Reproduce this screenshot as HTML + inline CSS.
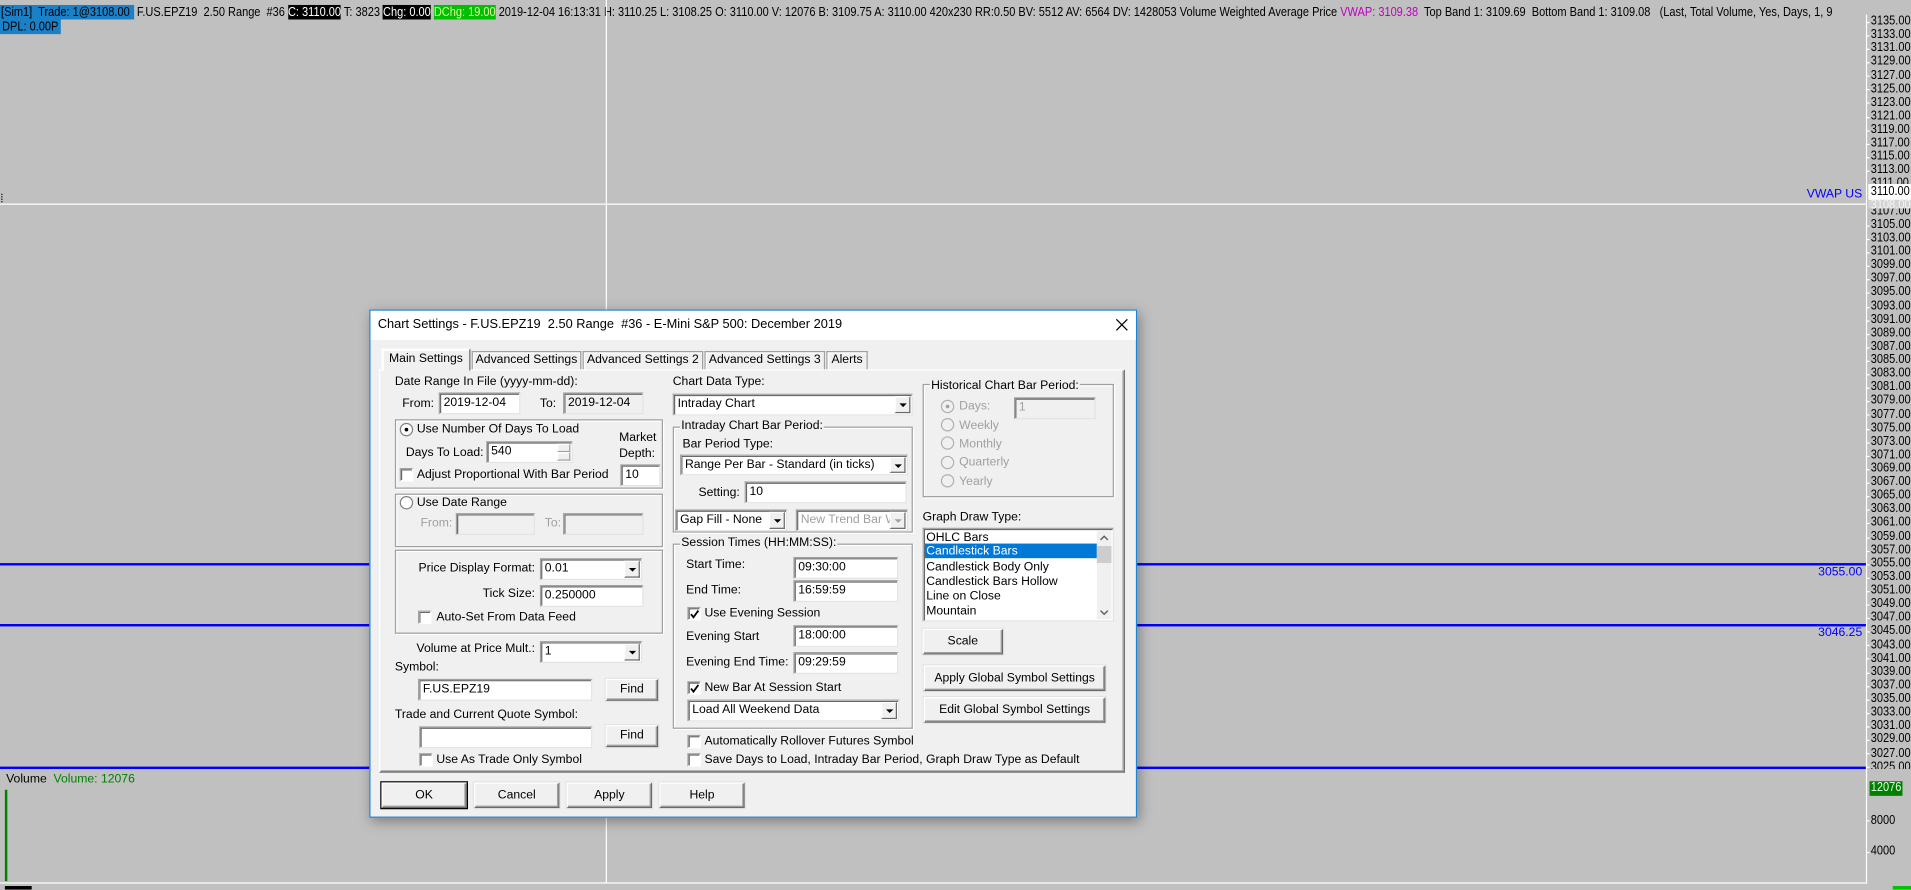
<!DOCTYPE html>
<html><head><meta charset="utf-8">
<style>
html,body{margin:0;padding:0;width:1911px;height:890px;overflow:hidden;background:#c0c0c0}
#s{position:absolute;left:0;top:0;width:1568px;height:730px;transform:scale(1.21875);transform-origin:0 0;background:#c0c0c0;font-family:"Liberation Sans",Arial,sans-serif;overflow:hidden}
.a{position:absolute}
.t{position:absolute;white-space:nowrap;font-size:10px;line-height:13px;height:13px;color:#000}
.ax{position:absolute;left:1535px;font-size:10.5px;line-height:13px;color:#000;white-space:nowrap;transform:scaleX(0.86);transform-origin:0 0}
.tk{position:absolute;left:1531px;width:3px;height:1px;background:#fff}
.in{position:absolute;background:#fff;border:1px solid;border-color:#a0a0a0 #e3e3e3 #e3e3e3 #a0a0a0;box-shadow:inset 1px 1px 0 #696969;box-sizing:border-box;font-size:10px;padding-left:3px;white-space:nowrap;overflow:hidden}
.dis{background:#f0f0f0;color:#a0a0a0}
.cb{position:absolute;background:#fff;border:1px solid;border-color:#a0a0a0 #e3e3e3 #e3e3e3 #a0a0a0;box-shadow:inset 1px 1px 0 #696969;box-sizing:border-box;font-size:10px;padding-left:3px;white-space:nowrap;overflow:hidden}
.cb i{position:absolute;right:1px;top:1px;bottom:1px;width:13px;background:#f0f0f0;border:1px solid;border-color:#fff #696969 #696969 #fff;box-sizing:border-box}
.cb i:after{content:"";position:absolute;left:3px;top:50%;margin-top:-1px;border-left:3px solid transparent;border-right:3px solid transparent;border-top:3px solid #000}
.cb.dis i:after{border-top-color:#a0a0a0}
.btn{position:absolute;background:#f0f0f0;border:1px solid;border-color:#fff #696969 #696969 #fff;box-shadow:inset -1px -1px 0 #a0a0a0,0 0 0 1px #e3e3e3;box-sizing:border-box;font-size:10px;text-align:center;white-space:nowrap}
.grp{position:absolute;border:1px solid #a0a0a0;box-shadow:1px 1px 0 #fff,inset 1px 1px 0 #fff;box-sizing:border-box}
.gl{position:absolute;background:#f0f0f0;padding:0 1px;font-size:10px;line-height:13px;white-space:nowrap}
.ck{position:absolute;width:11px;height:11px;background:#fff;border:1px solid;border-color:#a0a0a0 #fff #fff #a0a0a0;box-shadow:inset 1px 1px 0 #696969;box-sizing:border-box}
.rd{position:absolute;width:11px;height:11px;border-radius:50%;background:#fff;border:1px solid #808080;box-sizing:border-box}
.rd.on:after{content:"";position:absolute;left:3px;top:3px;width:3px;height:3px;border-radius:50%;background:#000}
.rd.g{background:#f0f0f0;border-color:#b0b0b0}
.rd.g.on:after{background:#a0a0a0}
.tab{position:absolute;top:288px;height:15px;border:1px solid #a0a0a0;border-bottom:none;box-sizing:border-box;background:#f0f0f0;font-size:10px;line-height:14px;text-align:center;white-space:nowrap;box-shadow:inset 1px 1px 0 #fff}
.gr{color:#a0a0a0}
</style></head><body>
<div id="s">
<!-- status rows -->
<div class="a" style="left:0;top:0;width:1531px;height:30px;overflow:hidden">
<div class="a" style="left:0;top:4px;height:12px;width:1780px;overflow:hidden;white-space:nowrap;font-size:10.5px;line-height:12px;transform:scaleX(0.86);transform-origin:0 0"><span style="background:#1a80c8;color:#000;padding:0 1px">[Sim1]&nbsp; Trade: 1@3108.00&nbsp;</span> F.US.EPZ19&nbsp; 2.50 Range&nbsp; #36 <span style="background:#000;color:#fff">C: 3110.00</span> T: 3823 <span style="background:#000;color:#fff">Chg: 0.00</span> <span style="background:#00c000;color:#e0ffa0">DChg: 19.00</span> 2019-12-04 16:13:31 H: 3110.25 L: 3108.25 O: 3110.00 V: 12076 B: 3109.75 A: 3110.00 420x230 RR:0.50 BV: 5512 AV: 6564 DV: 1428053 Volume Weighted Average Price <span style="color:#c000c0">VWAP: 3109.38</span>&nbsp; Top Band 1: 3109.69&nbsp; Bottom Band 1: 3109.08&nbsp;&nbsp; (Last, Total Volume, Yes, Days, 1, 9</div>
<div class="a" style="left:0;top:16px;height:12px;font-size:10.5px;line-height:12px;background:#1a80c8;padding:0 2px;transform:scaleX(0.86);transform-origin:0 0">DPL: 0.00P</div>
</div>

<!-- crosshair -->
<div class="a" style="left:497px;top:0;width:1px;height:725px;background:#fff"></div>
<div class="a" style="left:0;top:167px;width:1531px;height:1px;background:#fff"></div>
<div class="a" style="left:1px;top:159px;width:1px;height:7px;border-left:1px dotted #000"></div>
<!-- axis line -->
<div class="a" style="left:1531px;top:12px;width:1px;height:713px;background:#fff"></div>
<div class="a" style="left:0;top:724px;width:1532px;height:1px;background:#fff"></div>
<div class="a" style="left:4px;top:727px;width:22px;height:3px;background:#000"></div>
<div class="a" style="left:1553px;top:727px;width:15px;height:3px;background:#00c000"></div>

<!-- blue lines -->
<div class="a" style="left:0;top:462px;width:1531px;height:2px;background:#0000ff"></div>
<div class="a" style="left:0;top:512px;width:1531px;height:2px;background:#0000ff"></div>
<div class="a" style="left:0;top:629px;width:1531px;height:2px;background:#0000ff"></div>
<div class="t" style="left:1480px;width:48px;text-align:right;top:463px;color:#0000ff">3055.00</div>
<div class="t" style="left:1480px;width:48px;text-align:right;top:513px;color:#0000ff">3046.25</div>
<div class="t" style="left:1470px;width:58px;text-align:right;top:153px;color:#0000ff">VWAP US</div>

<!-- axis labels -->
<div class="a" style="left:1532px;top:0;width:36px;height:631px;overflow:hidden">
<div style="position:absolute;left:-1532px;top:0;width:1568px;height:631px">
<div class="ax" style="top:11px">3135.00</div><div class="ax" style="top:22px">3133.00</div><div class="ax" style="top:33px">3131.00</div><div class="ax" style="top:44px">3129.00</div><div class="ax" style="top:55.5px">3127.00</div><div class="ax" style="top:66.6px">3125.00</div><div class="ax" style="top:77.7px">3123.00</div><div class="ax" style="top:88.8px">3121.00</div><div class="ax" style="top:100px">3119.00</div><div class="ax" style="top:111px">3117.00</div><div class="ax" style="top:122px">3115.00</div><div class="ax" style="top:133.3px">3113.00</div><div class="ax" style="top:144.4px">3111.00</div><div class="ax" style="top:166.7px">3107.00</div><div class="ax" style="top:177.8px">3105.00</div><div class="ax" style="top:188.9px">3103.00</div><div class="ax" style="top:200px">3101.00</div><div class="ax" style="top:211.2px">3099.00</div><div class="ax" style="top:222.3px">3097.00</div><div class="ax" style="top:233.4px">3095.00</div><div class="ax" style="top:244.5px">3093.00</div><div class="ax" style="top:255.6px">3091.00</div><div class="ax" style="top:266.8px">3089.00</div><div class="ax" style="top:277.9px">3087.00</div><div class="ax" style="top:289px">3085.00</div><div class="ax" style="top:300.1px">3083.00</div><div class="ax" style="top:311.2px">3081.00</div><div class="ax" style="top:322.4px">3079.00</div><div class="ax" style="top:333.5px">3077.00</div><div class="ax" style="top:344.6px">3075.00</div><div class="ax" style="top:355.7px">3073.00</div><div class="ax" style="top:366.8px">3071.00</div><div class="ax" style="top:378px">3069.00</div><div class="ax" style="top:389px">3067.00</div><div class="ax" style="top:400.2px">3065.00</div><div class="ax" style="top:411.3px">3063.00</div><div class="ax" style="top:422.4px">3061.00</div><div class="ax" style="top:433.6px">3059.00</div><div class="ax" style="top:444.7px">3057.00</div><div class="ax" style="top:455.8px">3055.00</div><div class="ax" style="top:467px">3053.00</div><div class="ax" style="top:478px">3051.00</div><div class="ax" style="top:489.2px">3049.00</div><div class="ax" style="top:500.3px">3047.00</div><div class="ax" style="top:511.4px">3045.00</div><div class="ax" style="top:522.5px">3043.00</div><div class="ax" style="top:533.6px">3041.00</div><div class="ax" style="top:544.8px">3039.00</div><div class="ax" style="top:555.9px">3037.00</div><div class="ax" style="top:567px">3035.00</div><div class="ax" style="top:578px">3033.00</div><div class="ax" style="top:589.2px">3031.00</div><div class="ax" style="top:600.4px">3029.00</div><div class="ax" style="top:611.5px">3027.00</div><div class="ax" style="top:622.6px">3025.00</div>
</div></div>
<div class="a" style="left:1533px;top:151px;width:35px;height:13px;background:#fff;overflow:hidden"><div class="ax" style="left:2px;top:0">3110.00</div></div>
<div class="a" style="left:1533px;top:164px;width:35px;height:7px;background:#d4d4d4;overflow:hidden"><div class="ax" style="left:2px;top:-2px;color:#f4f4f4">3108.00</div></div>
<div class="tk" style="top:18px"></div><div class="tk" style="top:29px"></div><div class="tk" style="top:40px"></div><div class="tk" style="top:51px"></div><div class="tk" style="top:62px"></div><div class="tk" style="top:73px"></div><div class="tk" style="top:84px"></div><div class="tk" style="top:96px"></div><div class="tk" style="top:107px"></div><div class="tk" style="top:118px"></div><div class="tk" style="top:129px"></div><div class="tk" style="top:140px"></div><div class="tk" style="top:185px"></div><div class="tk" style="top:196px"></div><div class="tk" style="top:207px"></div><div class="tk" style="top:218px"></div><div class="tk" style="top:229px"></div><div class="tk" style="top:240px"></div><div class="tk" style="top:252px"></div><div class="tk" style="top:263px"></div><div class="tk" style="top:274px"></div><div class="tk" style="top:285px"></div><div class="tk" style="top:296px"></div><div class="tk" style="top:307px"></div><div class="tk" style="top:318px"></div><div class="tk" style="top:329px"></div><div class="tk" style="top:340px"></div><div class="tk" style="top:352px"></div><div class="tk" style="top:363px"></div><div class="tk" style="top:374px"></div><div class="tk" style="top:385px"></div><div class="tk" style="top:396px"></div><div class="tk" style="top:407px"></div><div class="tk" style="top:418px"></div><div class="tk" style="top:429px"></div><div class="tk" style="top:441px"></div><div class="tk" style="top:452px"></div><div class="tk" style="top:463px"></div><div class="tk" style="top:474px"></div><div class="tk" style="top:485px"></div><div class="tk" style="top:496px"></div><div class="tk" style="top:507px"></div><div class="tk" style="top:518px"></div><div class="tk" style="top:529px"></div><div class="tk" style="top:540px"></div><div class="tk" style="top:552px"></div><div class="tk" style="top:563px"></div><div class="tk" style="top:574px"></div><div class="tk" style="top:585px"></div><div class="tk" style="top:596px"></div><div class="tk" style="top:607px"></div><div class="tk" style="top:618px"></div><div class="tk" style="top:629px"></div><div class="tk" style="top:673px"></div><div class="tk" style="top:699px"></div>

<!-- volume pane -->
<div class="t" style="left:5px;top:633px">Volume&nbsp; <span style="color:#008000">Volume: 12076</span></div>
<div class="a" style="left:4px;top:648px;width:2px;height:75px;background:#008000"></div>
<div class="a" style="left:1534px;top:641px;width:27px;height:12px;background:#008000;overflow:hidden"><div class="ax" style="left:1px;top:-1px;color:#e0ffe0">12076</div></div>
<div class="ax" style="top:667px">8000</div>
<div class="ax" style="top:692px">4000</div>

<!-- dialog -->
<div class="a" style="left:303px;top:254px;width:630px;height:417px;background:#f0f0f0;border:1px solid #1883d7;box-sizing:border-box;box-shadow:2px 3px 10px rgba(0,0,0,0.35)"></div>
<div class="a" style="left:304px;top:255px;width:628px;height:24px;background:#fff"></div>
<div class="t" style="left:310px;top:260px;font-size:10.5px">Chart Settings - F.US.EPZ19&nbsp; 2.50 Range&nbsp; #36 - E-Mini S&amp;P 500: December 2019</div>
<svg class="a" style="left:915px;top:261px" width="11" height="11"><path d="M1 1L10 10M10 1L1 10" stroke="#000" stroke-width="1"/></svg>

<!-- tab panel -->
<div class="a" style="left:311px;top:303px;width:612px;height:331px;border:1px solid;border-color:#fff #696969 #696969 #fff;box-shadow:inset -1px -1px 0 #a0a0a0;box-sizing:border-box"></div>
<div class="tab" style="left:387px;width:90px">Advanced Settings</div>
<div class="tab" style="left:478px;width:99px">Advanced Settings 2</div>
<div class="tab" style="left:578px;width:99px">Advanced Settings 3</div>
<div class="tab" style="left:678px;width:34px">Alerts</div>
<div class="tab" style="left:313px;top:286px;height:18px;width:73px;line-height:16px;border-color:#fff #696969 #696969 #fff">Main Settings</div>

<!-- left column -->
<div class="t" style="left:324px;top:307px">Date Range In File (yyyy-mm-dd):</div>
<div class="t" style="left:330px;top:325px">From:</div>
<div class="in" style="left:360px;top:322px;width:67px;height:18px;line-height:16px">2019-12-04</div>
<div class="t" style="left:443px;top:325px">To:</div>
<div class="in" style="left:462px;top:322px;width:66px;height:18px;line-height:16px;background:#f0f0f0">2019-12-04</div>

<div class="grp" style="left:324px;top:344px;width:220px;height:57px"></div>
<div class="rd on" style="left:328px;top:347px"></div>
<div class="t" style="left:342px;top:346px">Use Number Of Days To Load</div>
<div class="t" style="left:508px;top:353px">Market</div>
<div class="t" style="left:508px;top:366px">Depth:</div>
<div class="t" style="left:333px;top:365px">Days To Load:</div>
<div class="in" style="left:399px;top:362px;width:71px;height:18px;line-height:16px">540
 <div style="position:absolute;right:1px;top:1px;width:11px;height:7px;border:1px solid;border-color:#fff #a0a0a0 #a0a0a0 #fff;background:#f0f0f0;box-sizing:border-box"></div>
 <div style="position:absolute;right:1px;top:8px;width:11px;height:7px;border:1px solid;border-color:#fff #a0a0a0 #a0a0a0 #fff;background:#f0f0f0;box-sizing:border-box"></div>
</div>
<div class="ck" style="left:328px;top:384px"></div>
<div class="t" style="left:342px;top:383px">Adjust Proportional With Bar Period</div>
<div class="in" style="left:509px;top:381px;width:33px;height:18px;line-height:16px">10</div>

<div class="grp" style="left:324px;top:405px;width:220px;height:44px"></div>
<div class="rd" style="left:328px;top:407px"></div>
<div class="t" style="left:342px;top:406px">Use Date Range</div>
<div class="t gr" style="left:345px;top:423px">From:</div>
<div class="in dis" style="left:374px;top:421px;width:65px;height:18px"></div>
<div class="t gr" style="left:447px;top:423px">To:</div>
<div class="in dis" style="left:462px;top:421px;width:66px;height:18px"></div>

<div class="grp" style="left:324px;top:451px;width:220px;height:69px"></div>
<div class="t" style="left:330px;width:109px;text-align:right;top:460px">Price Display Format:</div>
<div class="cb" style="left:443px;top:458px;width:84px;height:18px;line-height:16px">0.01<i></i></div>
<div class="t" style="left:330px;width:109px;text-align:right;top:481px">Tick Size:</div>
<div class="in" style="left:443px;top:480px;width:85px;height:18px;line-height:16px">0.250000</div>
<div class="ck" style="left:343px;top:501px"></div>
<div class="t" style="left:358px;top:500px">Auto-Set From Data Feed</div>

<div class="t" style="left:320px;width:119px;text-align:right;top:526px">Volume at Price Mult.:</div>
<div class="cb" style="left:443px;top:526px;width:84px;height:18px;line-height:16px">1<i></i></div>
<div class="t" style="left:324px;top:541px">Symbol:</div>
<div class="in" style="left:343px;top:557px;width:143px;height:18px;line-height:16px">F.US.EPZ19</div>
<div class="btn" style="left:497px;top:557px;width:43px;height:18px;line-height:16px">Find</div>
<div class="t" style="left:324px;top:580px">Trade and Current Quote Symbol:</div>
<div class="in" style="left:344px;top:596px;width:142px;height:18px"></div>
<div class="btn" style="left:497px;top:595px;width:43px;height:18px;line-height:16px">Find</div>
<div class="ck" style="left:344px;top:618px"></div>
<div class="t" style="left:358px;top:617px">Use As Trade Only Symbol</div>

<!-- middle column -->
<div class="t" style="left:552px;top:307px">Chart Data Type:</div>
<div class="cb" style="left:552px;top:323px;width:197px;height:18px;line-height:16px">Intraday Chart<i></i></div>
<div class="grp" style="left:552px;top:350px;width:197px;height:87px"></div>
<div class="gl" style="left:558px;top:343px">Intraday Chart Bar Period:</div>
<div class="t" style="left:560px;top:358px">Bar Period Type:</div>
<div class="cb" style="left:558px;top:373px;width:187px;height:17px;line-height:15px">Range Per Bar - Standard (in ticks)<i></i></div>
<div class="t" style="left:560px;width:47px;text-align:right;top:398px">Setting:</div>
<div class="in" style="left:611px;top:395px;width:133px;height:18px;line-height:16px">10</div>
<div class="cb" style="left:554px;top:418px;width:92px;height:18px;line-height:16px">Gap Fill - None<i></i></div>
<div class="cb dis" style="left:653px;top:418px;width:92px;height:18px;line-height:16px">New Trend Bar W<i></i></div>

<div class="grp" style="left:552px;top:446px;width:197px;height:152px"></div>
<div class="gl" style="left:558px;top:439px">Session Times (HH:MM:SS):</div>
<div class="t" style="left:563px;top:457px">Start Time:</div>
<div class="in" style="left:651px;top:457px;width:86px;height:18px;line-height:16px">09:30:00</div>
<div class="t" style="left:563px;top:478px">End Time:</div>
<div class="in" style="left:651px;top:476px;width:86px;height:18px;line-height:16px">16:59:59</div>
<div class="ck" style="left:564px;top:498px"><svg style="position:absolute;left:1px;top:1px" width="8" height="8"><path d="M1 4L3 6.5L7 1" stroke="#000" stroke-width="1.5" fill="none"/></svg></div>
<div class="t" style="left:578px;top:497px">Use Evening Session</div>
<div class="t" style="left:563px;top:516px">Evening Start</div>
<div class="in" style="left:651px;top:513px;width:86px;height:18px;line-height:16px">18:00:00</div>
<div class="t" style="left:563px;top:537px">Evening End Time:</div>
<div class="in" style="left:651px;top:535px;width:86px;height:18px;line-height:16px">09:29:59</div>
<div class="ck" style="left:564px;top:559px"><svg style="position:absolute;left:1px;top:1px" width="8" height="8"><path d="M1 4L3 6.5L7 1" stroke="#000" stroke-width="1.5" fill="none"/></svg></div>
<div class="t" style="left:578px;top:558px">New Bar At Session Start</div>
<div class="cb" style="left:564px;top:574px;width:174px;height:18px;line-height:16px">Load All Weekend Data<i></i></div>
<div class="ck" style="left:564px;top:603px"></div>
<div class="t" style="left:578px;top:602px">Automatically Rollover Futures Symbol</div>
<div class="ck" style="left:564px;top:618px"></div>
<div class="t" style="left:578px;top:617px">Save Days to Load, Intraday Bar Period, Graph Draw Type as Default</div>

<!-- right column -->
<div class="grp" style="left:757px;top:315px;width:157px;height:93px"></div>
<div class="gl" style="left:763px;top:310px">Historical Chart Bar Period:</div>
<div class="rd g on" style="left:772px;top:328px"></div><div class="t gr" style="left:787px;top:327px">Days:</div>
<div class="in dis" style="left:832px;top:326px;width:67px;height:18px;line-height:16px">1</div>
<div class="rd g" style="left:772px;top:343px"></div><div class="t gr" style="left:787px;top:343px">Weekly</div>
<div class="rd g" style="left:772px;top:358px"></div><div class="t gr" style="left:787px;top:358px">Monthly</div>
<div class="rd g" style="left:772px;top:374px"></div><div class="t gr" style="left:787px;top:373px">Quarterly</div>
<div class="rd g" style="left:772px;top:389px"></div><div class="t gr" style="left:787px;top:389px">Yearly</div>

<div class="t" style="left:757px;top:418px">Graph Draw Type:</div>
<div class="in" style="left:757px;top:433px;width:157px;height:77px;padding:0"></div>
<div class="a" style="left:759px;top:446px;width:141px;height:12px;background:#0078d7"></div>
<div class="t" style="left:760px;top:435px">OHLC Bars</div>
<div class="t" style="left:760px;top:446px;color:#fff">Candlestick Bars</div>
<div class="t" style="left:760px;top:459px">Candlestick Body Only</div>
<div class="t" style="left:760px;top:471px">Candlestick Bars Hollow</div>
<div class="t" style="left:760px;top:483px">Line on Close</div>
<div class="t" style="left:760px;top:495px">Mountain</div>
<div class="a" style="left:900px;top:435px;width:12px;height:73px;background:#f0f0f0"></div>
<div class="a" style="left:900px;top:448px;width:12px;height:14px;background:#cdcdcd"></div>
<svg class="a" style="left:902px;top:438px" width="8" height="6"><path d="M1 5L4 2L7 5" stroke="#606060" stroke-width="1.2" fill="none"/></svg>
<svg class="a" style="left:902px;top:500px" width="8" height="6"><path d="M1 1L4 4L7 1" stroke="#606060" stroke-width="1.2" fill="none"/></svg>

<div class="btn" style="left:757px;top:516px;width:66px;height:21px;line-height:19px">Scale</div>
<div class="btn" style="left:758px;top:546px;width:149px;height:21px;line-height:19px">Apply Global Symbol Settings</div>
<div class="btn" style="left:758px;top:572px;width:149px;height:21px;line-height:19px">Edit Global Symbol Settings</div>

<!-- bottom buttons -->
<div class="btn" style="left:313px;top:642px;width:70px;height:21px;line-height:19px;box-shadow:inset -1px -1px 0 #a0a0a0,0 0 0 1px #000">OK</div>
<div class="btn" style="left:389px;top:642px;width:70px;height:21px;line-height:19px">Cancel</div>
<div class="btn" style="left:465px;top:642px;width:70px;height:21px;line-height:19px">Apply</div>
<div class="btn" style="left:541px;top:642px;width:70px;height:21px;line-height:19px">Help</div>
</div>
</body></html>
